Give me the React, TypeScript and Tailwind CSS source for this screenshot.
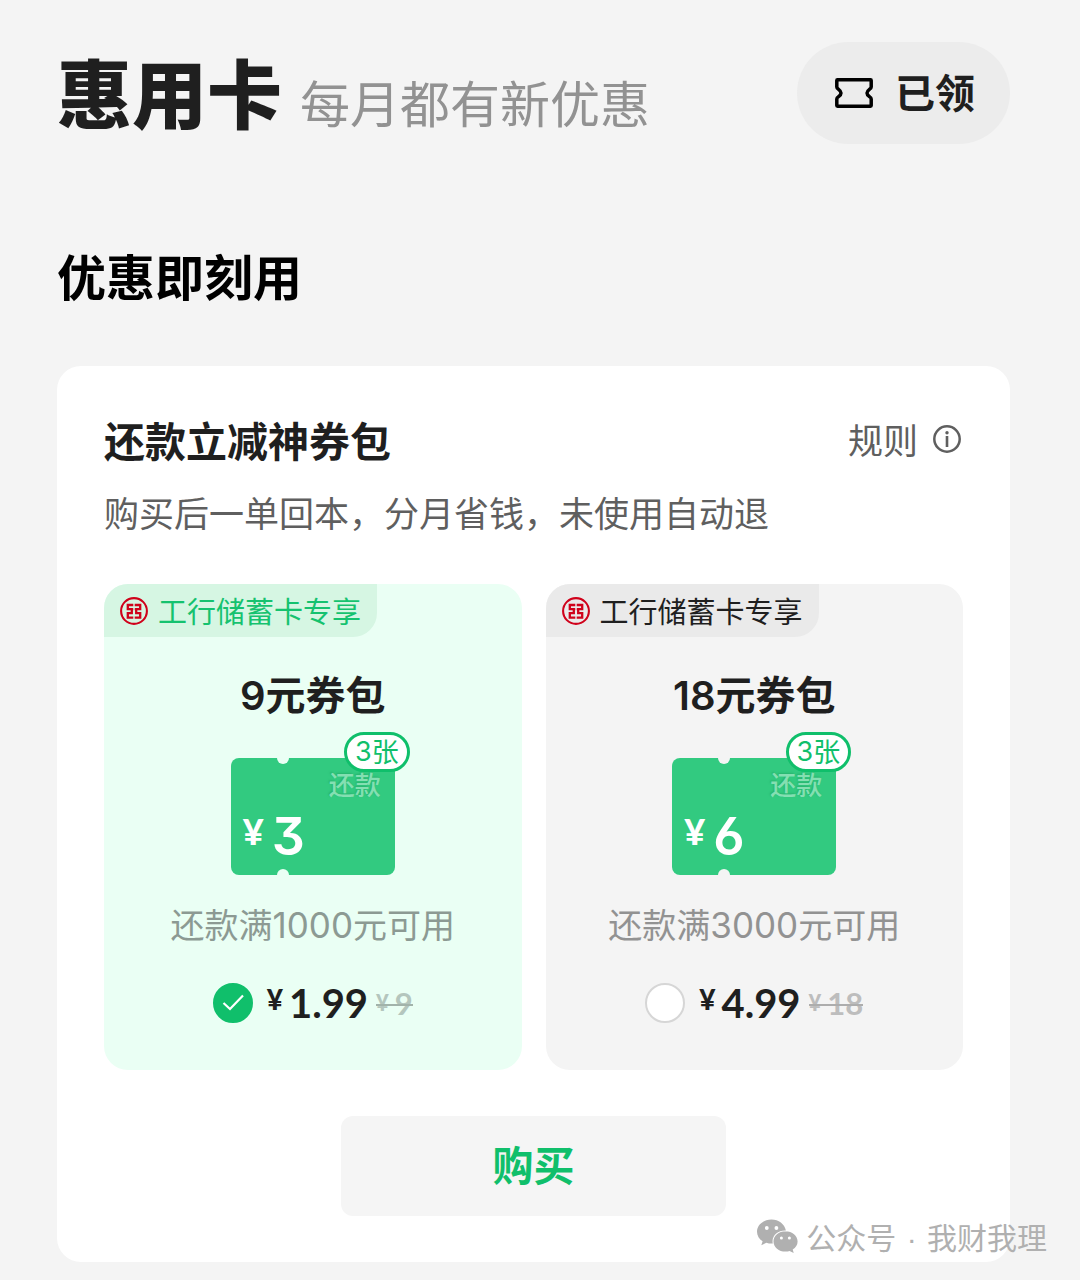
import { useState } from 'react'
import clsx from 'clsx'

const packs = [
  { id: 'pack-9', total: 9, amount: 3, count: 3, min: 1000, price: '1.99', original: 9 },
  { id: 'pack-18', total: 18, amount: 6, count: 3, min: 3000, price: '4.99', original: 18 },
] as const

type Pack = (typeof packs)[number]

function TicketIcon() {
  return (
    <svg viewBox="0 0 38 30" className="w-[38px] h-[30px]" fill="none" aria-hidden="true">
      <path
        d="M2.5 1.8H35.5a.7.7 0 0 1 .7.7V9C36.2 11.3 32 11.5 32 15S36.2 18.7 36.2 21V27.5a.7.7 0 0 1-.7.7H2.5A.7.7 0 0 1 1.8 27.5V21C1.8 18.7 6 18.5 6 15S1.8 11.3 1.8 9V2.5A.7.7 0 0 1 2.5 1.8Z"
        stroke="#000"
        strokeWidth="3.5"
        strokeLinejoin="round"
      />
    </svg>
  )
}

function InfoIcon() {
  return (
    <svg viewBox="0 0 28 28" className="size-7" aria-hidden="true">
      <circle cx="14" cy="14" r="12.7" fill="none" stroke="#5f5f5f" strokeWidth="2.5" />
      <rect x="12.7" y="11" width="2.6" height="11" fill="#5f5f5f" />
      <circle cx="14" cy="7.7" r="1.7" fill="#5f5f5f" />
    </svg>
  )
}

function BankIcon() {
  return (
    <svg viewBox="0 0 28 28" className="size-7 shrink-0" fill="none" stroke="#d0021b" aria-hidden="true">
      <circle cx="14" cy="14" r="12.9" strokeWidth="2.1" />
      <path
        d="M13.3 8H7.8V12.2H11.8V16.2H7.8V20.6H13.3M14.7 8H20.2V12.2H16.2V16.2H20.2V20.6H14.7"
        strokeWidth="2.3"
      />
      <path d="M11.8 12.2H13.3M14.7 12.2H16.2" strokeWidth="2" />
    </svg>
  )
}

function WechatIcon() {
  return (
    <svg viewBox="0 0 41 34" className="w-[41px] h-[34px]" aria-hidden="true">
      <path
        d="M14.5.5C6.5.5 0 5.9 0 12.700c0 4 2.200 7.300 5.600 9.500L4.300 26.300l5-2.600c1.900.6 4 1 6.500.9-1.700-7.600 5-13.400 13.100-13C27.600 5.100 21.600.5 14.500.5Z"
        fill="#b0b0b0"
      />
      <path
        d="M28.500 12.200c-6.700 0-12 4.600-12 10.200s5.300 10.200 12 10.200c1.500 0 2.900-.2 4.100-.6l4.100 2-1-3.500c3-1.900 4.900-4.800 4.900-8.100 0-5.600-5.400-10.200-12.100-10.200Z"
        fill="#b0b0b0"
      />
      <g fill="#fff">
        <circle cx="9.8" cy="9" r="1.9" />
        <circle cx="19.4" cy="9" r="1.9" />
        <circle cx="24.4" cy="19" r="1.5" />
        <circle cx="32.4" cy="19" r="1.5" />
      </g>
    </svg>
  )
}

function Coupon({ pack, active }: { pack: Pack; active: boolean }) {
  const notch = active ? 'bg-[#eafff4]' : 'bg-[#f4f4f4]'
  return (
    <div className="relative mt-[35px] w-[164px] h-[117px] rounded-lg bg-[#32ca80] text-white">
      <span className={clsx('absolute left-[46px] -top-1.5 size-3 rounded-full', notch)} />
      <span className={clsx('absolute left-[46px] -bottom-1.5 size-3 rounded-full', notch)} />
      <span className="absolute right-3.5 top-2 text-[26px] leading-9 font-medium text-[#84dfb2] [text-shadow:-1px_-1px_2px_#28b36d]">
        还款
      </span>
      <div className="absolute left-3 bottom-3 flex items-start gap-2">
        <span className="font-['Lato'] text-[36px] leading-10 font-black">¥</span>
        <span className="font-['Inter'] text-[52px] leading-[52px] font-semibold [font-feature-settings:'cv03','cv09']">
          {pack.amount}
        </span>
      </div>
      <span className="absolute -right-[15px] -top-[26px] flex h-10 items-center rounded-full border-3 border-[#10bf6b] bg-white px-2 pb-0.5 text-[27px] text-[#10bf6b]">
        <span className="font-['Inter'] leading-none">{pack.count}</span>张
      </span>
    </div>
  )
}

function PackOption({ pack, active, onSelect }: { pack: Pack; active: boolean; onSelect: () => void }) {
  return (
    <label
      htmlFor={pack.id}
      className={clsx(
        'flex flex-col items-center overflow-hidden rounded-3xl pb-[47px] cursor-pointer',
        active ? 'bg-[#eafff4]' : 'bg-[#f4f4f4]',
      )}
    >
      <span
        className={clsx(
          'flex h-[53px] items-center gap-2.5 self-start rounded-br-3xl px-4 text-[29px]',
          active ? 'bg-[#d6f6e3] text-[#15c26f]' : 'bg-[#eaeaea] text-[#1f1f1f]',
        )}
      >
        <BankIcon />
        工行储蓄卡专享
      </span>
      <h3 className="mt-[26px] text-[40px] leading-[60px] font-bold text-[#1f1f1f]">
        <span className="font-['Inter'] font-semibold leading-none">{pack.total}</span>元券包
      </h3>
      <Coupon pack={pack} active={active} />
      <p className={clsx('mt-6 text-[34px] leading-[50px]', active ? 'text-[#8c9a93]' : 'text-[#929292]')}>
        还款满<span className="font-['Inter'] text-[35px] leading-none">{pack.min}</span>元可用
      </p>
      <div className="mt-[34px] flex h-10 items-center">
        <span className="relative size-10">
          <input
            id={pack.id}
            type="radio"
            name="pack"
            checked={active}
            onChange={onSelect}
            className="block size-10 appearance-none rounded-full border-2 border-[#d6d6d6] bg-white checked:border-[#10bf6b] checked:bg-[#10bf6b]"
          />
          {active && (
            <svg viewBox="0 0 40 40" className="pointer-events-none absolute inset-0" fill="none" aria-hidden="true">
              <path d="M10.5 20L17 26L30 12.5" stroke="#fff" strokeWidth="2.2" />
            </svg>
          )}
        </span>
        <span className="ml-3.5 flex items-start gap-1.5 font-['Lato'] text-[#1f1f1f]">
          <span className="text-[28px] leading-8 font-black">¥</span>
          <span className="text-[40px] leading-10 font-bold">{pack.price}</span>
        </span>
        <s
          className={clsx(
            "relative ml-2 flex items-center gap-1.5 font-['Lato'] no-underline",
            active ? 'text-[#b4c6bd]' : 'text-[#bdbdbd]',
          )}
        >
          <span className="text-[22px] leading-8 font-black">¥</span>
          <span className="text-[31px] leading-10 font-bold">{pack.original}</span>
          <span className={clsx('absolute inset-x-0 top-[21px] h-0.5', active ? 'bg-[#a2b3aa]' : 'bg-[#adadad]')} />
        </s>
      </div>
    </label>
  )
}

export default function App() {
  const [selected, setSelected] = useState<string>(packs[0].id)

  return (
    <main className="relative min-h-screen bg-[#f4f4f4] pt-[42px] pr-[70px] pb-[18px] pl-[57px] font-['Noto_Sans_CJK_SC',sans-serif]">
      <header className="flex items-center justify-between">
        <div className="flex items-baseline gap-[18px] pb-1">
          <h1 className="text-[75px] leading-[98px] font-black text-[#1f1f1f]">惠用卡</h1>
          <p className="text-[50px] leading-[60px] text-[#929292]">每月都有新优惠</p>
        </div>
        <button
          type="button"
          className="flex h-[102px] items-center gap-[22px] rounded-full bg-[#ececec] pl-[38px] pr-[35px] text-[40px] font-bold text-[#1f1f1f]"
        >
          <TicketIcon />
          <span className="pb-1">已领</span>
        </button>
      </header>

      <h2 className="mt-[101px] text-[49px] leading-[60px] font-bold text-black">优惠即刻用</h2>

      <section className="mt-[61px] rounded-3xl bg-white px-[47px] pt-[43px] pb-[46px]">
        <div className="flex items-center justify-between">
          <h3 className="text-[41px] leading-[60px] font-bold text-[#1f1f1f]">还款立减神券包</h3>
          <button type="button" className="mr-0.5 flex items-center gap-[15px] text-[35px] leading-[50px] text-[#5f5f5f]">
            规则
            <InfoIcon />
          </button>
        </div>
        <p className="mt-[18px] text-[35px] leading-[50px] text-[#5f5f5f]">
          购买后一单回本，分月省钱，未使用自动退
        </p>

        <div className="mt-[47px] grid grid-cols-2 gap-6">
          {packs.map((pack) => (
            <PackOption
              key={pack.id}
              pack={pack}
              active={selected === pack.id}
              onSelect={() => setSelected(pack.id)}
            />
          ))}
        </div>

        <button
          type="button"
          className="mx-auto mt-[46px] block h-[100px] w-[385px] rounded-xl bg-[#f5f5f5] pb-1 text-[41px] font-bold text-[#10bf6b]"
        >
          购买
        </button>
      </section>

      <div className="absolute right-[33px] bottom-6 flex items-center gap-2 text-[30px] leading-10 text-[#b0b0b0]">
        <WechatIcon />
        <span>
          公众号<span className="mx-0.5 font-['Liberation_Sans'] leading-none"> · </span>我财我理
        </span>
      </div>
    </main>
  )
}
